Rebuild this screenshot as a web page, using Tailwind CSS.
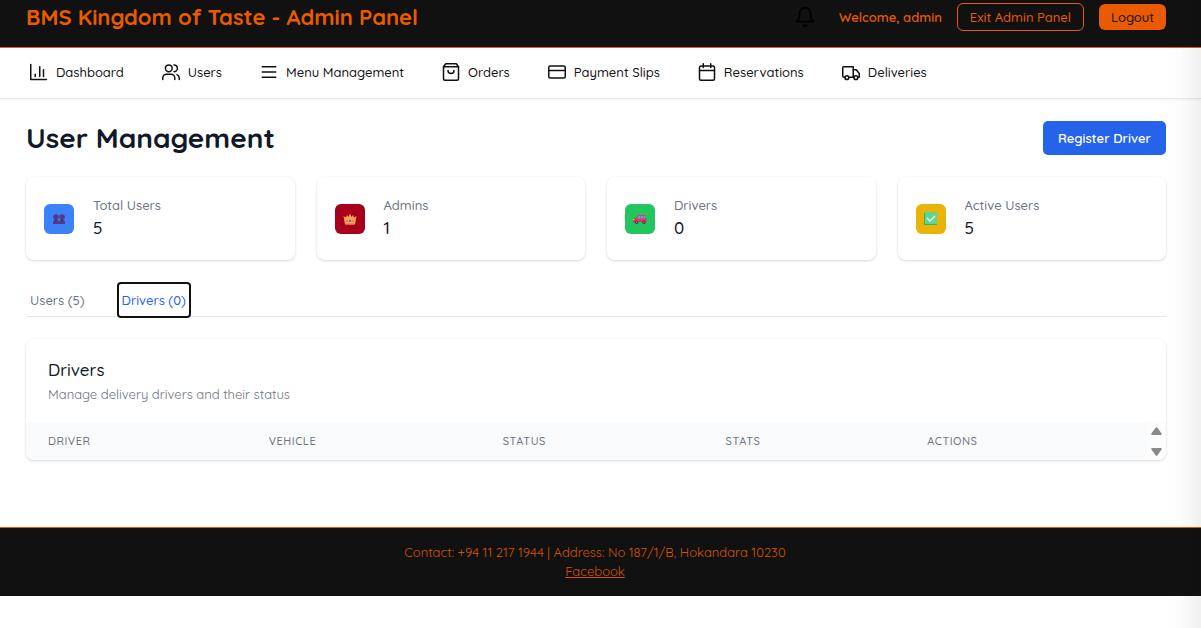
<!DOCTYPE html>
<html lang="en">
<head>
<meta charset="utf-8">
<meta name="viewport" content="width=device-width, initial-scale=1">
<title>BMS Kingdom of Taste - Admin Panel</title>
<script src="https://cdn.jsdelivr.net/npm/@tailwindcss/browser@4"></script>
</head>
<body class="relative min-h-screen bg-white font-['Quicksand','Inter',sans-serif] text-[13px] leading-5 text-[#111827]">

<header class="flex items-start justify-between border-b border-[#ea5b00] bg-[#111111] pr-[35px] pl-[26px] pt-[3px] pb-4 text-[#ea5b00]">
  <h1 class="text-[22px] leading-7 font-bold">BMS Kingdom of Taste - Admin Panel</h1>
  <div class="flex h-7 items-center gap-[15px]">
    <button type="button" aria-label="Notifications" class="mr-2 text-black">
      <svg class="size-[22px]" viewBox="0 0 24 24" fill="none" stroke="currentColor" stroke-width="2" stroke-linecap="round" stroke-linejoin="round"><path d="M6 8a6 6 0 0 1 12 0c0 7 3 9 3 9H3s3-2 3-9"/><path d="M10.3 21a1.94 1.94 0 0 0 3.4 0"/></svg>
    </button>
    <span class="font-semibold">Welcome, admin</span>
    <button type="button" class="h-7 rounded-md border border-[#ea5b00] px-3 font-medium">Exit Admin Panel</button>
    <button type="button" class="h-[26px] rounded-md bg-[#ea5b00] px-3 font-medium text-[#111111]">Logout</button>
  </div>
</header>

<nav class="flex h-[51px] items-center gap-[38px] border-b border-[#e5e7eb] pb-[2px] pl-[30px] font-medium text-[#111111] shadow-xs">
  <a href="#" class="flex items-center gap-2">
    <svg class="size-[18px]" viewBox="0 0 24 24" fill="none" stroke="currentColor" stroke-width="2" stroke-linecap="round" stroke-linejoin="round"><path d="M1 2v20h21"/><path d="M7 18v-3"/><path d="M13 18V5"/><path d="M18 18V9"/></svg>
    Dashboard</a>
  <a href="#" class="flex items-center gap-2">
    <svg class="size-[18px]" viewBox="0 0 24 24" fill="none" stroke="currentColor" stroke-width="2" stroke-linecap="round" stroke-linejoin="round"><path d="M17 22v-2a5 5 0 0 0-5-5H6a5 5 0 0 0-5 5v2"/><circle cx="9" cy="7" r="4.5"/><path d="M23 22v-2a5 5 0 0 0-3-4.5"/><path d="M16 2.5a4.5 4.5 0 0 1 0 9"/></svg>
    Users</a>
  <a href="#" class="flex items-center gap-2">
    <svg class="size-[18px]" viewBox="0 0 24 24" fill="none" stroke="currentColor" stroke-width="2" stroke-linecap="round"><path d="M3 5h18M3 12h18M3 19h18"/></svg>
    Menu Management</a>
  <a href="#" class="flex items-center gap-2">
    <svg class="size-[18px]" viewBox="0 0 24 24" fill="none" stroke="currentColor" stroke-width="2" stroke-linecap="round" stroke-linejoin="round"><path d="M5 1 2 5v16a2 2 0 0 0 2 2h16a2 2 0 0 0 2-2V5l-3-4Z"/><path d="M2 5h20"/><path d="M16 10a4 4 0 0 1-8 0"/></svg>
    Orders</a>
  <a href="#" class="flex items-center gap-2">
    <svg class="size-[18px]" viewBox="0 0 24 24" fill="none" stroke="currentColor" stroke-width="2" stroke-linecap="round" stroke-linejoin="round"><rect x="1" y="4" width="22" height="16" rx="2"/><path d="M1 10h22"/></svg>
    Payment Slips</a>
  <a href="#" class="flex items-center gap-2">
    <svg class="size-[18px]" viewBox="0 0 24 24" fill="none" stroke="currentColor" stroke-width="2" stroke-linecap="round" stroke-linejoin="round"><rect x="2" y="4" width="20" height="19" rx="2"/><path d="M7 1v5M17 1v5M2 10h20"/></svg>
    Reservations</a>
  <a href="#" class="flex items-center gap-2">
    <svg class="size-[18px]" viewBox="0 0 24 24" fill="none" stroke="currentColor" stroke-width="2" stroke-linecap="round" stroke-linejoin="round"><path d="M4 19H3a2 2 0 0 1-2-2V6a1 1 0 0 1 1-1h13v14H9"/><path d="M15 9h4l4 5v5h-2M15 19h1"/><circle cx="6.500" cy="19.500" r="2.500"/><circle cx="18.500" cy="19.500" r="2.500"/></svg>
    Deliveries</a>
</nav>

<main class="flex flex-col gap-[22px] pt-[22px] pr-[35px] pb-[67px] pl-[26px]">
  <div class="flex items-center justify-between">
    <h2 class="text-[28px] leading-[34px] font-bold">User Management</h2>
    <button type="button" class="h-[34px] rounded-[5px] bg-[#2563eb] px-[15px] font-semibold text-white">Register Driver</button>
  </div>

  <section class="grid grid-cols-4 gap-[22px]">
    <div class="flex h-[83px] items-center gap-[19px] rounded-lg bg-white px-[18px] shadow-[0_1px_3px_rgba(0,0,0,0.16)]">
      <div class="flex size-[30px] items-center justify-center rounded-md bg-[#3b82f6]">
        <svg class="size-[14px]" viewBox="0 0 14 14" fill="#56378c"><circle cx="4" cy="5" r="2.800"/><circle cx="10" cy="5" r="2.800"/><path d="M1 12V10q0-2 2-2h2q2 0 2 2 0-2 2-2h2q2 0 2 2v2Z"/><path d="M3 7h2v2H3zM9 7h2v2H9z" fill="#432b70"/></svg>
      </div>
      <dl class="pb-[2px]"><dt class="font-medium text-[#6b7280]">Total Users</dt><dd class="text-[17px] leading-[26px] font-medium">5</dd></dl>
    </div>
    <div class="flex h-[83px] items-center gap-[19px] rounded-lg bg-white px-[18px] shadow-[0_1px_3px_rgba(0,0,0,0.16)]">
      <div class="flex size-[30px] items-center justify-center rounded-md bg-[#a8001c]">
        <svg class="size-[14px]" viewBox="0 0 14 14"><path d="M.5 4 3 5.500 4 3l1.500 2L7 1.500 8.500 5 10 3l1 2.500L13.500 4 12 12.500H2Z" fill="#f9a350"/><path d="M3 11.500h8v1H3z" fill="#e9783c"/><circle cx="7" cy="9" r="1.300" fill="#4b7be0"/><circle cx="4" cy="9" r=".8" fill="#e8455b"/><circle cx="10" cy="9" r=".8" fill="#e8455b"/></svg>
      </div>
      <dl class="pb-[2px]"><dt class="font-medium text-[#6b7280]">Admins</dt><dd class="text-[17px] leading-[26px] font-medium">1</dd></dl>
    </div>
    <div class="flex h-[83px] items-center gap-[19px] rounded-lg bg-white px-[18px] shadow-[0_1px_3px_rgba(0,0,0,0.16)]">
      <div class="flex size-[30px] items-center justify-center rounded-md bg-[#22c55e]">
        <svg class="size-[14px]" viewBox="0 0 14 14"><path d="M0 10V7.500Q0 6.200 3 6l2-3h8v3h.6v4Z" fill="#e8334f"/><path d="M3.800 6.500l2-2.700h1.600v2.700zM8 3.800h2.200v2.700H8zM10.800 3.800h1.700v2.700h-1.700z" fill="#5aa5f5"/><path d="M0 7h1.500v1H0z" fill="#ffc83d"/><circle cx="3.500" cy="10.200" r="1.700" fill="#48315e"/><circle cx="11" cy="10.200" r="1.700" fill="#48315e"/><circle cx="3.500" cy="10.200" r=".6" fill="#bbb"/><circle cx="11" cy="10.200" r=".6" fill="#bbb"/></svg>
      </div>
      <dl class="pb-[2px]"><dt class="font-medium text-[#6b7280]">Drivers</dt><dd class="text-[17px] leading-[26px] font-medium">0</dd></dl>
    </div>
    <div class="flex h-[83px] items-center gap-[19px] rounded-lg bg-white px-[18px] shadow-[0_1px_3px_rgba(0,0,0,0.16)]">
      <div class="flex size-[30px] items-center justify-center rounded-md bg-[#eab308]">
        <svg class="size-[14px]" viewBox="0 0 14 14"><path d="M0 1h13v12H0z" fill="#3fae6c"/><path d="M1 0h12v12H1z" fill="#5ad890"/><path d="M3 6l3 3 5-5" fill="none" stroke="#fff" stroke-width="1.500"/></svg>
      </div>
      <dl class="pb-[2px]"><dt class="font-medium text-[#6b7280]">Active Users</dt><dd class="text-[17px] leading-[26px] font-medium">5</dd></dl>
    </div>
  </section>

  <div role="tablist" class="flex h-[35px] items-end gap-[30px] border-b border-[#e5e7eb]">
    <button type="button" role="tab" aria-selected="false" class="h-8 px-[4px] font-medium text-[#6b7280]">Users (5)</button>
    <button type="button" role="tab" aria-selected="true" class="h-8 rounded-xs px-[3px] font-medium text-[#2563eb] outline-2 outline-[#101010]">Drivers (0)</button>
  </div>

  <section class="overflow-hidden rounded-lg bg-white shadow-[0_1px_3px_rgba(0,0,0,0.16)]">
    <div class="px-[22px] pt-[18px] pb-[18px]">
      <h3 class="text-[17px] leading-[26px] font-medium">Drivers</h3>
      <p class="mt-px leading-5 text-[#6b7280]">Manage delivery drivers and their status</p>
    </div>
    <div class="flex h-[38px] bg-[#f9fafb]">
      <table class="w-full table-fixed text-left text-[11px] text-[#6b7280]">
        <thead>
          <tr>
            <th scope="col" class="w-[19.7%] pl-[22px] font-medium tracking-wider">DRIVER</th>
            <th scope="col" class="w-[20.9%] pl-[22px] font-medium tracking-wider">VEHICLE</th>
            <th scope="col" class="w-[19.9%] pl-[22px] font-medium tracking-wider">STATUS</th>
            <th scope="col" class="w-[18%] pl-[22px] font-medium tracking-wider">STATS</th>
            <th scope="col" class="w-[21.5%] pl-[22px] font-medium tracking-wider">ACTIONS</th>
          </tr>
        </thead>
      </table>
      <div aria-hidden="true" class="flex w-5 shrink-0 flex-col items-center justify-between bg-[#fcfcfc] pt-[5px] pb-[4px]">
        <svg class="h-2 w-[11px]" viewBox="0 0 11 8" fill="#8a8a8a"><path d="M4.500 .8Q5.500-.5 6.500 .8L10.600 6.500Q11 8 10 8H1Q0 8 .4 6.500Z"/></svg>
        <svg class="h-2 w-[11px]" viewBox="0 0 11 8" fill="#8a8a8a"><path d="M4.500 7.200Q5.500 8.500 6.500 7.200L10.600 1.500Q11 0 10 0H1Q0 0 .4 1.500Z"/></svg>
      </div>
    </div>
  </section>
</main>

<footer class="border-t border-[#ea5b00] bg-[#111111] pt-[15px] pr-[11px] pb-[15px] text-center leading-[19px] text-[#d65400]">
  <p>Contact: +94 11 217 1944 | Address: No 187/1/B, Hokandara 10230</p>
  <a href="#" class="underline">Facebook</a>
</footer>

<div aria-hidden="true" class="pointer-events-none absolute inset-y-0 right-0 w-10 bg-linear-to-r from-transparent via-black/1 to-black/6"></div>
</body>
</html>
